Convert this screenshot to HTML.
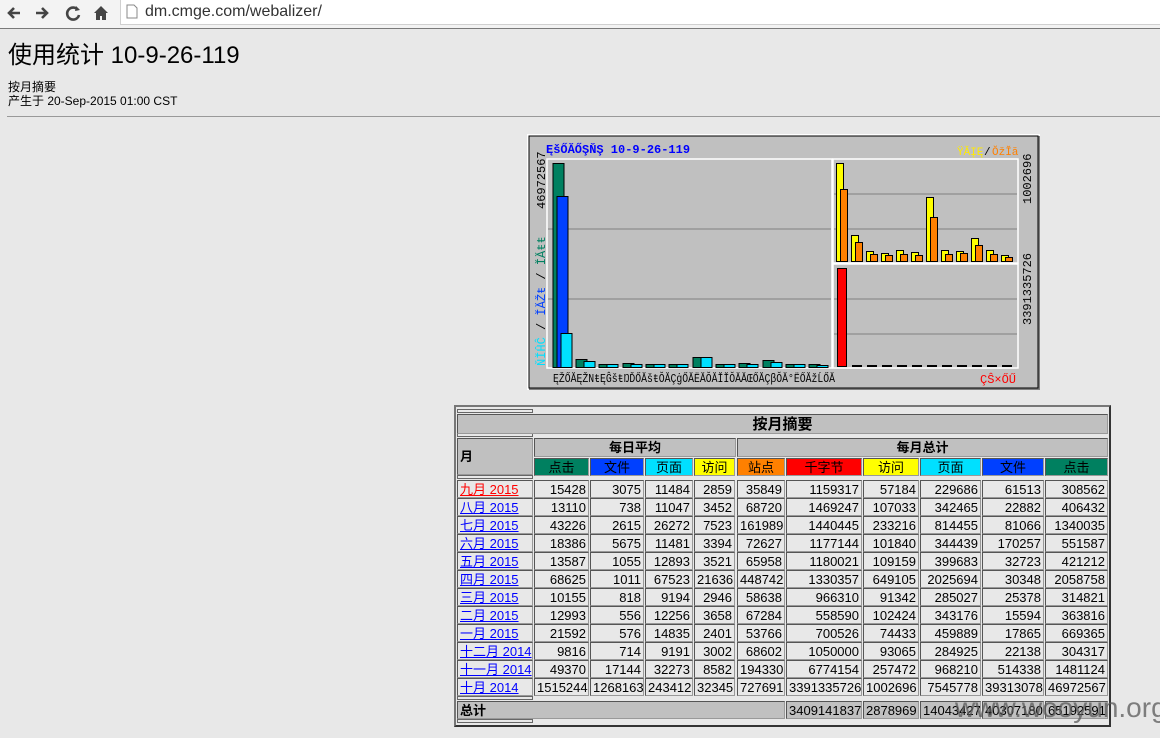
<!DOCTYPE html>
<html><head><meta charset="utf-8">
<style>
*{margin:0;padding:0;box-sizing:border-box}
body{width:1160px;height:738px;overflow:hidden;background:#e8e8e8;font-family:"Liberation Sans","Noto Sans CJK SC",sans-serif;color:#000;position:relative}
.bar{position:absolute;left:0;top:0;width:1160px;height:29px;background:#f3f3f3;border-bottom:1px solid #7a7a7a}
.addr{position:absolute;left:120px;top:0;width:1040px;height:25px;background:#fff;border:1px solid #d0d0d0;border-top:none;border-right:none}
.abs{position:absolute}
.c{position:absolute;border:1px solid #555;border-right-color:#999;border-bottom-color:#999;font-size:13px;line-height:15px;height:18px;padding:1px 2px;text-align:right;white-space:nowrap;overflow:hidden}
.h{background:#c0c0c0;text-align:center}
.b{font-weight:bold}
a{color:#00f;text-decoration:underline}
</style></head><body>
<div class="bar">
<svg class="abs" style="left:6px;top:4px" width="110" height="18" viewBox="0 0 110 18">
<path d="M14 9H3M8 4L3 9l5 5" stroke="#444" stroke-width="2.6" fill="none"/>
<path d="M30 9h11M36 4l5 5-5 5" stroke="#444" stroke-width="2.6" fill="none"/>
<path d="M72 6a6 6 0 1 0 1 5" stroke="#444" stroke-width="2.6" fill="none"/><path d="M70 2l4 4-5 1z" fill="#444"/>
<path d="M88 9l7-7 7 7h-2v7h-4v-4h-2v4h-4V9z" fill="#444"/>
</svg>
</div>
<div class="addr"><svg class="abs" style="left:5px;top:4px" width="12" height="15"><path d="M1 1h7l3 3v10H1z" fill="#fff" stroke="#888"/></svg>
<div class="abs" style="left:24px;top:3px;font-size:16px;color:#333">dm.cmge.com/webalizer/</div></div>
<div class="abs" style="left:8px;top:35px;font-size:24px">使用统计 10-9-26-119</div>
<div class="abs" style="left:8px;top:80px;font-size:12px;line-height:14px">按月摘要<br>产生于 20-Sep-2015 01:00 CST</div>
<div class="abs" style="left:7px;top:116px;width:1153px;height:1px;background:#999"></div>

<svg class="abs" style="left:527px;top:134px" width="513" height="256" viewBox="527 134 513 256" font-family="Liberation Mono,monospace">
<rect x="527" y="134" width="513" height="256" fill="#c0c0c0"/>
<path d="M527 134h513v256h-2V136h-509v254h-2z" fill="#fff"/>
<path d="M1038 136v252h-509v2h511V136z" fill="#808080"/>
<rect x="529" y="136" width="509" height="252" fill="none" stroke="#000" stroke-width="1"/>
<text x="546" y="153" font-size="12" font-weight="bold" fill="#0000ff">ĘšŐĂŐŞŇŞ 10-9-26-119</text>
<text x="957" y="155" font-size="11" fill="#ffea00">ŸĂĮĘ</text><text x="984" y="155" font-size="11">/</text><text x="992" y="155" font-size="11" fill="#ff8000">ŎžĬă</text>
<rect x="547" y="159" width="285" height="209" fill="none" stroke="#fff" stroke-width="1.5"/>
<rect x="833" y="159" width="185" height="104" fill="none" stroke="#fff" stroke-width="1.5"/>
<rect x="833" y="264" width="185" height="104" fill="none" stroke="#fff" stroke-width="1.5"/>
<g stroke="#808080"><path d="M548 229h283M548 299h283M834 194h183M834 229h183M834 299h183M834 334h183"/></g>
<g stroke="#000" stroke-width="1">
<rect x="553" y="163.5" width="11" height="204" fill="#008060"/>
<rect x="557" y="196.5" width="11" height="171" fill="#0040ff"/>
<rect x="561" y="333.5" width="11" height="34" fill="#00e0ff"/>
<rect x="576" y="359.5" width="11" height="8" fill="#008060"/><rect x="584" y="361.5" width="11" height="6" fill="#00e0ff"/>
<rect x="599" y="364.5" width="11" height="3" fill="#008060"/><rect x="607" y="364.5" width="11" height="3" fill="#00e0ff"/>
<rect x="623" y="363.5" width="11" height="4" fill="#008060"/><rect x="631" y="364.5" width="11" height="3" fill="#00e0ff"/>
<rect x="646" y="364.5" width="11" height="3" fill="#008060"/><rect x="654" y="364.5" width="11" height="3" fill="#00e0ff"/>
<rect x="669" y="364.5" width="11" height="3" fill="#008060"/><rect x="677" y="364.5" width="11" height="3" fill="#00e0ff"/>
<rect x="693" y="357.5" width="11" height="10" fill="#008060"/><rect x="701" y="357.5" width="11" height="10" fill="#00e0ff"/>
<rect x="716" y="364.5" width="11" height="3" fill="#008060"/><rect x="724" y="364.5" width="11" height="3" fill="#00e0ff"/>
<rect x="739" y="363.5" width="11" height="4" fill="#008060"/><rect x="747" y="364.5" width="11" height="3" fill="#00e0ff"/>
<rect x="763" y="360.5" width="11" height="7" fill="#008060"/><rect x="771" y="362.5" width="11" height="5" fill="#00e0ff"/>
<rect x="786" y="364.5" width="11" height="3" fill="#008060"/><rect x="794" y="364.5" width="11" height="3" fill="#00e0ff"/>
<rect x="809" y="364.5" width="11" height="3" fill="#008060"/><rect x="817" y="365.5" width="11" height="2" fill="#00e0ff"/>
</g>
<g stroke="#000">
<rect x="836.5" y="163.5" width="7" height="98" fill="#ffff00"/><rect x="840.5" y="189.5" width="7" height="72" fill="#ff8000"/>
<rect x="851.5" y="235.5" width="7" height="26" fill="#ffff00"/><rect x="855.5" y="242.5" width="7" height="19" fill="#ff8000"/>
<rect x="866.5" y="251.5" width="7" height="10" fill="#ffff00"/><rect x="870.5" y="254.5" width="7" height="7" fill="#ff8000"/>
<rect x="881.5" y="253.5" width="7" height="8" fill="#ffff00"/><rect x="885.5" y="255.5" width="7" height="6" fill="#ff8000"/>
<rect x="896.5" y="250.5" width="7" height="11" fill="#ffff00"/><rect x="900.5" y="254.5" width="7" height="7" fill="#ff8000"/>
<rect x="911.5" y="252.5" width="7" height="9" fill="#ffff00"/><rect x="915.5" y="255.5" width="7" height="6" fill="#ff8000"/>
<rect x="926.5" y="197.5" width="7" height="64" fill="#ffff00"/><rect x="930.5" y="217.5" width="7" height="44" fill="#ff8000"/>
<rect x="941.5" y="250.5" width="7" height="11" fill="#ffff00"/><rect x="945.5" y="254.5" width="7" height="7" fill="#ff8000"/>
<rect x="956.5" y="251.5" width="7" height="10" fill="#ffff00"/><rect x="960.5" y="253.5" width="7" height="8" fill="#ff8000"/>
<rect x="971.5" y="238.5" width="7" height="23" fill="#ffff00"/><rect x="975.5" y="245.5" width="7" height="16" fill="#ff8000"/>
<rect x="986.5" y="250.5" width="7" height="11" fill="#ffff00"/><rect x="990.5" y="254.5" width="7" height="7" fill="#ff8000"/>
<rect x="1001.5" y="255.5" width="7" height="6" fill="#ffff00"/><rect x="1005.5" y="257.5" width="7" height="4" fill="#ff8000"/>
<rect x="837.5" y="268.5" width="9" height="98" fill="#ff0000"/>
</g>
<g fill="#000"><rect x="852" y="365" width="10" height="2"/><rect x="867" y="365" width="10" height="2"/><rect x="882" y="365" width="10" height="2"/><rect x="897" y="365" width="10" height="2"/><rect x="912" y="365" width="10" height="2"/><rect x="927" y="365" width="10" height="2"/><rect x="942" y="365" width="10" height="2"/><rect x="957" y="365" width="10" height="2"/><rect x="972" y="365" width="10" height="2"/><rect x="987" y="365" width="10" height="2"/><rect x="1002" y="365" width="10" height="2"/></g>
<text x="553" y="382" font-size="12" textLength="282" lengthAdjust="spacingAndGlyphs">ĘŽŐĂĘŽNŧĘĜšŧŊĎŐĂšŧŎĂÇġŐĂËĂŎĂĬĬŎĂĂŒŐĂÇβŎĂ°ËŐĂžĹŐĂ</text>
<text x="980" y="383" font-size="12" fill="#ff0000">ÇŜ×ŐŰ</text>
<text transform="translate(545,209) rotate(-90)" font-size="12">46972567</text>
<text transform="translate(545,366) rotate(-90)" font-size="12"><tspan fill="#00e0ff">ŇĬĤĈ</tspan> / <tspan fill="#0040ff">ĬĂŽŧ</tspan> / <tspan fill="#008060">ĬĂŧŧ</tspan></text>
<text transform="translate(1031,204) rotate(-90)" font-size="12">1002696</text>
<text transform="translate(1031,325) rotate(-90)" font-size="12">3391335726</text>
</svg>

<div class="abs" style="left:454px;top:405px;width:657px;height:322px;border:2px solid #777;border-right-color:#333;border-bottom-color:#333"></div>
<div class="abs" style="left:457px;top:409px;width:76px;height:4px;border:1px solid #666"></div>
<div class="abs" style="left:457px;top:433px;width:76px;height:4px;border:1px solid #666"></div>
<div class="abs" style="left:457px;top:475px;width:76px;height:4px;border:1px solid #666"></div>
<div class="abs" style="left:457px;top:696px;width:76px;height:4px;border:1px solid #666"></div>
<div class="abs" style="left:457px;top:719px;width:76px;height:4px;border:1px solid #666"></div>
<div class="c h b" style="left:457px;top:414px;width:651px;height:20px;font-size:15px;line-height:17px">按月摘要</div>
<div class="c h b" style="left:457px;top:438px;width:76px;height:37px;text-align:left;line-height:33px">月</div>
<div class="c h b" style="left:534px;top:438px;width:202px;height:19px">每日平均</div>
<div class="c h b" style="left:737px;top:438px;width:371px;height:19px">每月总计</div>
<div class="c h" style="left:534px;top:458px;width:55px;background:#008060">点击</div>
<div class="c h" style="left:590px;top:458px;width:54px;background:#0040ff">文件</div>
<div class="c h" style="left:645px;top:458px;width:48px;background:#00e0ff">页面</div>
<div class="c h" style="left:694px;top:458px;width:41px;background:#ffff00">访问</div>
<div class="c h" style="left:737px;top:458px;width:48px;background:#ff8000">站点</div>
<div class="c h" style="left:786px;top:458px;width:76px;background:#ff0000">千字节</div>
<div class="c h" style="left:863px;top:458px;width:56px;background:#ffff00">访问</div>
<div class="c h" style="left:920px;top:458px;width:61px;background:#00e0ff">页面</div>
<div class="c h" style="left:982px;top:458px;width:62px;background:#0040ff">文件</div>
<div class="c h" style="left:1045px;top:458px;width:63px;background:#008060">点击</div>
<div id="rows"></div>
<div class="c b" style="left:457px;top:701px;width:328px;background:#c0c0c0;text-align:left">总计</div>
<div class="c" style="left:786px;top:701px;width:76px;background:#c0c0c0">3409141837</div>
<div class="c" style="left:863px;top:701px;width:56px;background:#c0c0c0">2878969</div>
<div class="c" style="left:920px;top:701px;width:61px;background:#c0c0c0">14043427</div>
<div class="c" style="left:982px;top:701px;width:62px;background:#c0c0c0">40307180</div>
<div class="c" style="left:1045px;top:701px;width:63px;background:#c0c0c0">65192591</div>
<div class="abs" style="left:955px;top:692px;font-size:28px;color:rgba(90,90,90,0.75)">www.wooyun.org</div>
<script>
var d=[["九月 2015",15428,3075,11484,2859,35849,1159317,57184,229686,61513,308562],
["八月 2015",13110,738,11047,3452,68720,1469247,107033,342465,22882,406432],
["七月 2015",43226,2615,26272,7523,161989,1440445,233216,814455,81066,1340035],
["六月 2015",18386,5675,11481,3394,72627,1177144,101840,344439,170257,551587],
["五月 2015",13587,1055,12893,3521,65958,1180021,109159,399683,32723,421212],
["四月 2015",68625,1011,67523,21636,448742,1330357,649105,2025694,30348,2058758],
["三月 2015",10155,818,9194,2946,58638,966310,91342,285027,25378,314821],
["二月 2015",12993,556,12256,3658,67284,558590,102424,343176,15594,363816],
["一月 2015",21592,576,14835,2401,53766,700526,74433,459889,17865,669365],
["十二月 2014",9816,714,9191,3002,68602,1050000,93065,284925,22138,304317],
["十一月 2014",49370,17144,32273,8582,194330,6774154,257472,968210,514338,1481124],
["十月 2014",1515244,1268163,243412,32345,727691,3391335726,1002696,7545778,39313078,46972567]];
var L=[457,534,590,645,694,737,786,863,920,982,1045],W=[76,55,54,48,41,48,76,56,61,62,63],h="";
d.forEach(function(r,i){var t=480+i*18;r.forEach(function(v,j){
h+='<div class="c" style="left:'+L[j]+'px;top:'+t+'px;width:'+W[j]+'px;'+(j==0?'text-align:left':'')+'">'+(j==0?'<a style="'+(i==0?'color:#f00':'')+'">'+v+'</a>':v)+'</div>';});});
document.getElementById("rows").outerHTML=h;
</script>
</body></html>
